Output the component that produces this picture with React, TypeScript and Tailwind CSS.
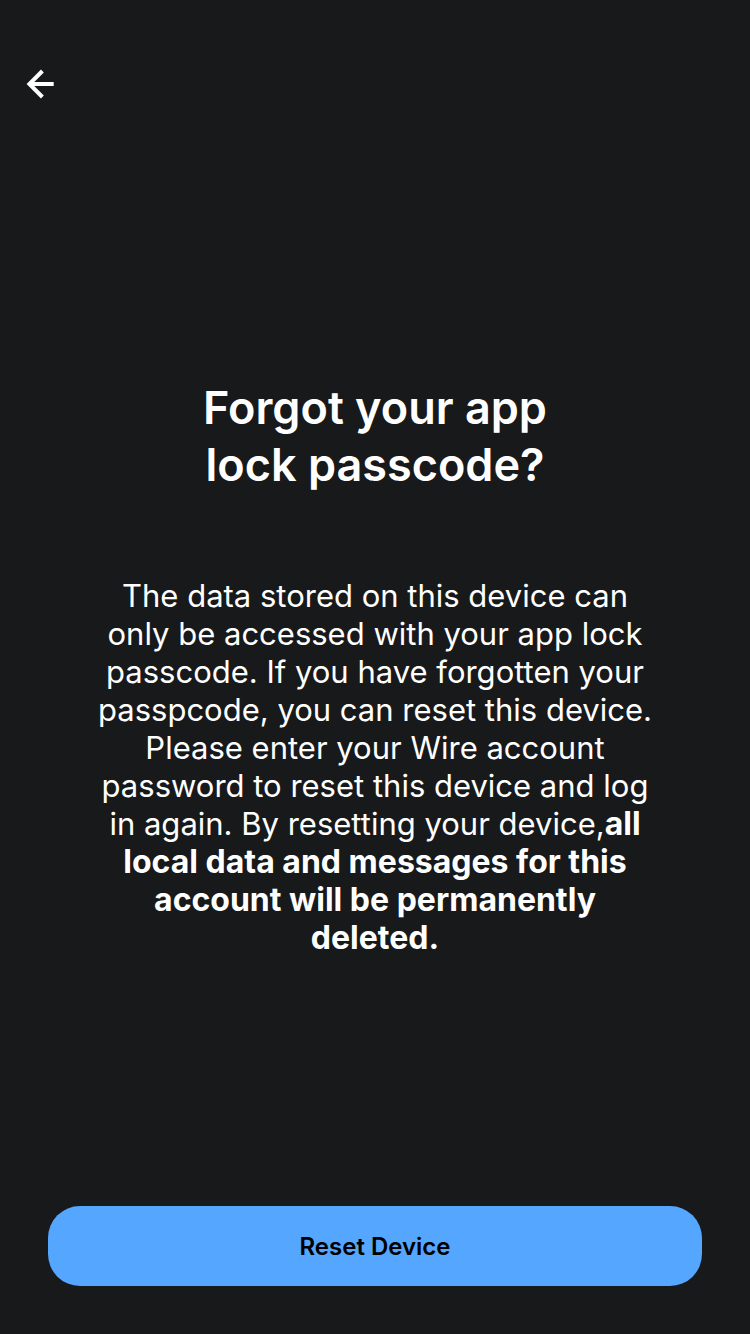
export default function App() {
  return (
    <div className="flex min-h-screen flex-col bg-[#17191a] px-6 pb-12 text-white font-[Inter,'Liberation_Sans',sans-serif]">
      <header className="flex pt-16">
        <button type="button" aria-label="Back" className="flex size-10 items-center">
          <svg viewBox="0 0 32 32" className="size-8" fill="none" stroke="currentColor" strokeWidth="4">
            <path d="M29.7 16H6M18.4 3L5.4 16L18.4 29" />
          </svg>
        </button>
      </header>
      <main className="flex flex-1 flex-col items-center justify-center pt-[26px] text-center">
        <h1 className="max-w-[380px] text-[45px] leading-[57px] font-semibold">Forgot your app lock passcode?</h1>
        <p className="mt-21 max-w-[560px] text-[31px] leading-[38px]">
          The data stored on this device can only be accessed with your app lock passcode. If you have forgotten your
          passpcode, you can reset this device. Please enter your Wire account password to reset this device and log in
          again. By resetting your device,<strong className="text-[32px] font-bold">all local data and messages for this account will be permanently deleted.</strong>
        </p>
      </main>
      <footer className="px-6">
        <button type="button" className="h-20 w-full rounded-[32px] bg-[#54a6ff] pt-0.5 text-2xl font-semibold text-black">
          Reset Device
        </button>
      </footer>
    </div>
  );
}
